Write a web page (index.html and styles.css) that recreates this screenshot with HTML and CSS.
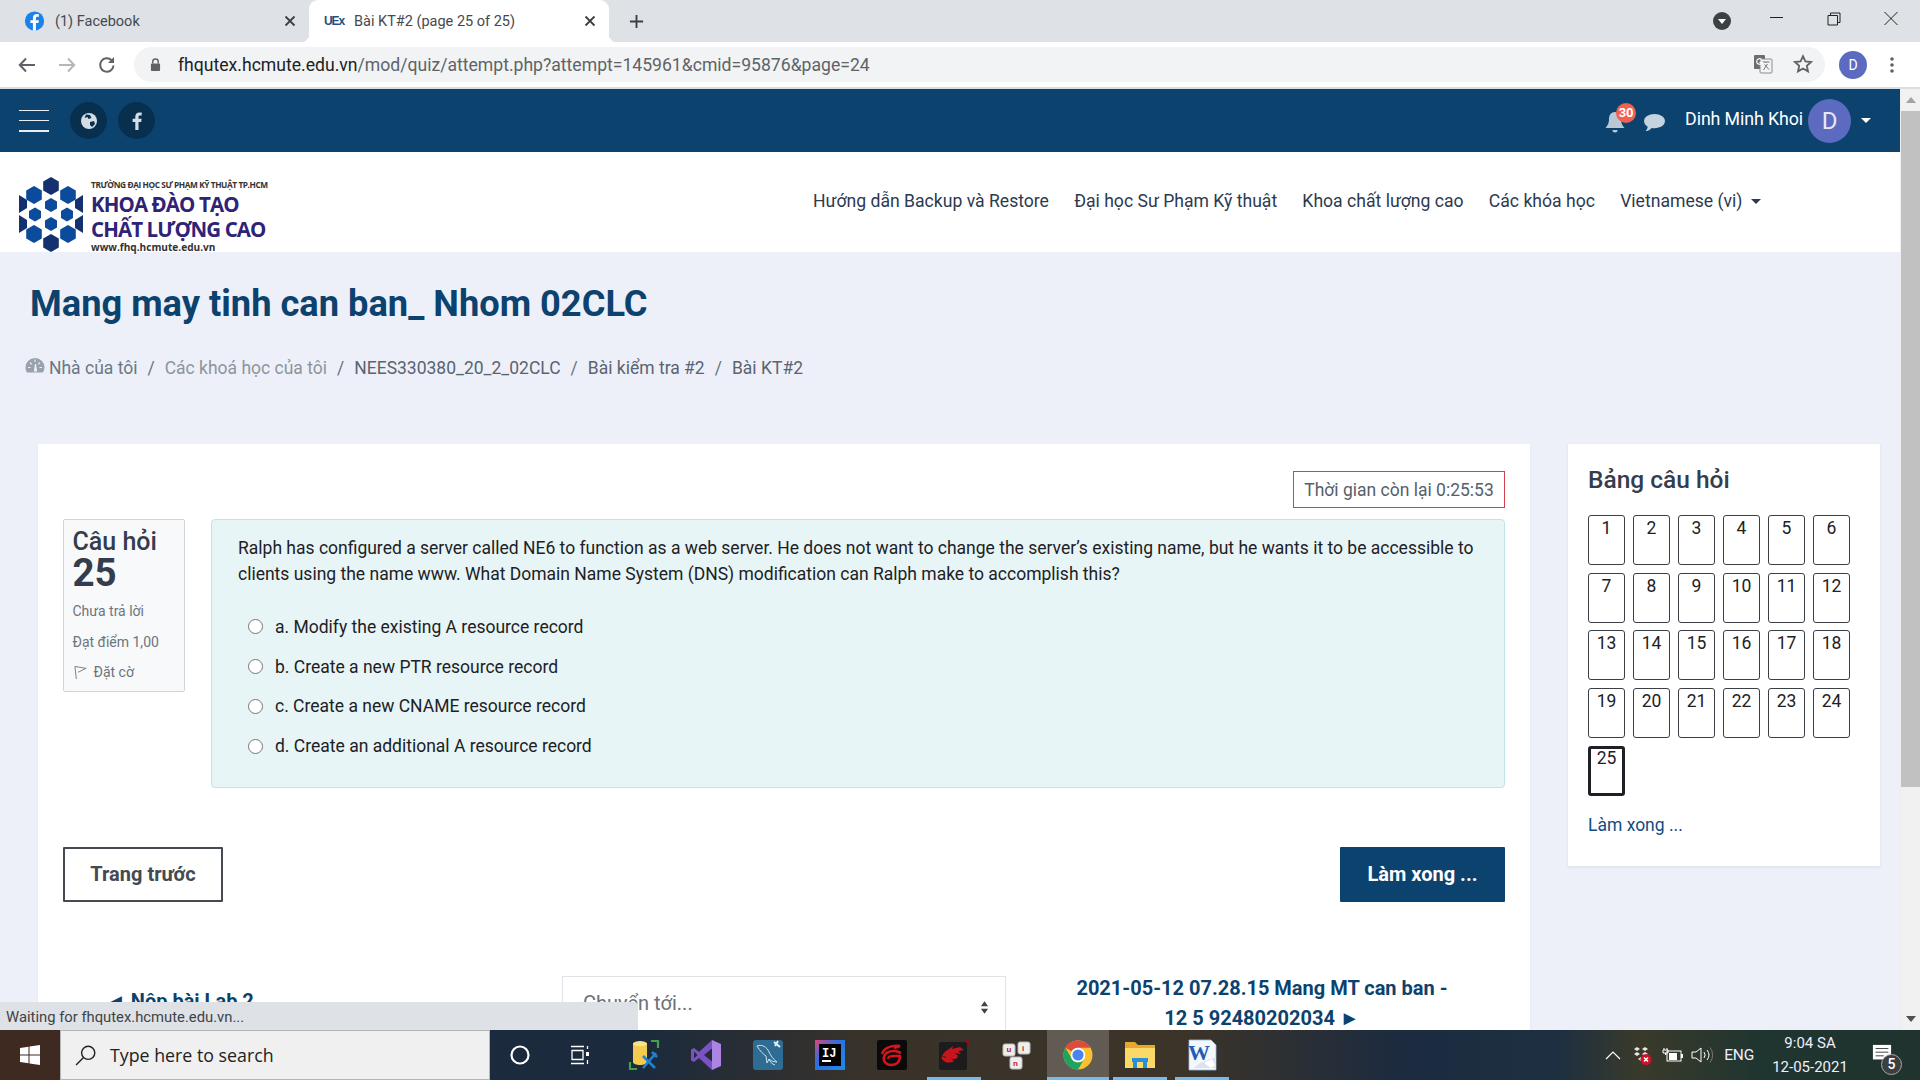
FILE: index.html
```html
<!DOCTYPE html>
<html lang="vi">
<head>
<meta charset="utf-8">
<title>Bài KT#2</title>
<link rel="stylesheet" href="styles.css">
</head>
<body>
<div class="screen">
  <div class="tabstrip">
    <div class="tab">
      <svg class="fav" viewBox="0 0 24 24"><circle cx="12" cy="12" r="11" fill="#1a82e8"/><path fill="#fff" d="M13.6 23v-8.600h2.900l.5-3.400h-3.400V8.900c0-1 .4-1.700 1.700-1.700H17V4.300c-.4-.1-1.400-.2-2.500-.2-2.600 0-4.300 1.500-4.300 4.400V11H7.300v3.400h2.900V23z"/></svg>
      <span class="tab-title">(1) Facebook</span>
      <svg class="tab-x" viewBox="0 0 12 12"><path d="M1.500 1.500l9 9M10.500 1.500l-9 9" stroke="#3c4043" stroke-width="1.800"/></svg>
    </div>
    <div class="tab tab-active">
      <span class="fav-text">UEx</span>
      <span class="tab-title">Bài KT#2 (page 25 of 25)</span>
      <svg class="tab-x" viewBox="0 0 12 12"><path d="M1.500 1.500l9 9M10.500 1.500l-9 9" stroke="#3c4043" stroke-width="1.800"/></svg>
    </div>
    <svg class="tab-plus" viewBox="0 0 16 16"><path d="M8 1v14M1 8h14" stroke="#3c4043" stroke-width="2"/></svg>
    <div class="win-controls">
      <svg class="tab-search" viewBox="0 0 18 18"><circle cx="9" cy="9" r="9" fill="#3c4043"/><path d="M5 7h8l-4 5z" fill="#fff"/></svg>
      <svg class="win-btn" viewBox="0 0 16 16"><path d="M1 6.500h13" stroke="#222" stroke-width="1"/></svg>
      <svg class="win-btn" viewBox="0 0 16 16"><path d="M2 4.500h9.500v9.500H2zM4.500 4.500V2H14v9.500h-2.500" fill="none" stroke="#222" stroke-width="1"/></svg>
      <svg class="win-btn" viewBox="0 0 16 16"><path d="M1.500 1l13 13M14.500 1l-13 13" stroke="#222" stroke-width="1"/></svg>
    </div>
  </div>

  <div class="toolbar">
    <svg class="tb-ico" viewBox="0 0 20 20"><path d="M18 10H3M9 3.500L2.800 10 9 16.500" fill="none" stroke="#5f6368" stroke-width="2"/></svg>
    <svg class="tb-ico" viewBox="0 0 20 20"><path d="M2 10h15M11 3.500l6.200 6.500-6.200 6.500" fill="none" stroke="#b4b7bb" stroke-width="2"/></svg>
    <svg class="tb-ico" viewBox="0 0 20 20"><path d="M16.500 10.500a6.700 6.700 0 1 1-1.900-5.200" fill="none" stroke="#5f6368" stroke-width="2"/><path d="M17 2v6h-6z" fill="#5f6368"/></svg>
    <div class="omnibox">
      <svg class="lock" viewBox="0 0 12 16"><path d="M3 7V5a3 3 0 0 1 6 0v2" fill="none" stroke="#5f6368" stroke-width="1.600"/><rect x="1" y="7" width="10" height="8" rx="1" fill="#5f6368"/></svg>
      <span class="url"><span class="url-host">fhqutex.hcmute.edu.vn</span>/mod/quiz/attempt.php?attempt=145961&amp;cmid=95876&amp;page=24</span>
      <svg class="translate" viewBox="0 0 20 20"><rect x="1" y="1" width="11" height="14" rx="1" fill="#6a6d71"/><rect x="7" y="5" width="12" height="14" rx="1" fill="#f1f3f4" stroke="#8a8d91"/><path d="M9.500 8h7M13 8v1M10.500 16l4-6M11.500 10.500l4.500 5" fill="none" stroke="#777" stroke-width="1"/><path d="M8.500 5.500a2.800 2.800 0 1 0 .6 3H6.500" fill="none" stroke="#fff" stroke-width="1.200"/></svg>
      <svg class="star" viewBox="0 0 20 20"><path d="M10 2.200l2.400 5.200 5.700.6-4.300 3.800 1.200 5.600-5-2.900-5 2.900 1.200-5.600L1.900 8l5.700-.6z" fill="none" stroke="#5f6368" stroke-width="1.800"/></svg>
    </div>
    <span class="profile">D</span>
    <svg class="kebab" viewBox="0 0 4 18"><circle cx="2" cy="3" r="1.800" fill="#5f6368"/><circle cx="2" cy="9" r="1.800" fill="#5f6368"/><circle cx="2" cy="15" r="1.800" fill="#5f6368"/></svg>
  </div>

  <div class="viewport">
    <div class="page">
      <nav class="topnav">
        <div class="burger"><i></i><i></i><i></i></div>
        <a class="round-btn round-first"><svg viewBox="0 0 20 20"><circle cx="10" cy="10" r="8" fill="#d5dde4"/><path d="M7 3.500l4 .5 1.500 3-3 1-1-2-3 1zM11 11l4-1 1 3-3 3-2-2z" fill="#082f4e"/></svg></a>
        <a class="round-btn"><svg viewBox="0 0 20 20"><path fill="#d5dde4" d="M11.500 19v-8h2.700l.4-3.200h-3.100V5.900c0-.9.300-1.500 1.600-1.500h1.600V1.600C14.400 1.500 13.500 1.400 12.400 1.400 10 1.400 8.300 2.900 8.300 5.600v2.200H5.600V11h2.700v8z"/></svg></a>
        <div class="nav-right">
          <span class="bell">
            <svg viewBox="0 0 22 24"><path d="M11 2c4 0 6 3 6 7 0 5 2 7 3.500 9H1.500C3 16 5 14 5 9c0-4 2-7 6-7zM8.500 20h5a2.500 2.500 0 0 1-5 0z" fill="#b8c8d6"/></svg>
            <b class="badge">30</b>
          </span>
          <svg class="chat" viewBox="0 0 24 20"><path d="M12 1c6 0 11 3 11 7.500S18 16 12 16c-1 0-2 0-3-.3C7.500 17.500 5 19 2.500 19c1.500-1.300 2.300-3 2.300-4.500C2.500 13 1 11 1 8.500 1 4 6 1 12 1z" fill="#c5d3de"/></svg>
          <span class="username">Dinh Minh Khoi</span>
          <span class="nav-avatar">D</span>
          <span class="caret caret-white"></span>
        </div>
      </nav>

      <header class="brand">
        <div class="logo">
          <svg class="logo-mark" viewBox="0 0 64 75">
            <defs>
              <polygon id="hexb" points="0,-9 7.800,-4.500 7.800,4.500 0,9 -7.800,4.500 -7.800,-4.500"/>
              <polygon id="hexs" points="0,-7 6,-3.500 6,3.500 0,7 -6,3.500 -6,-3.500"/>
            </defs>
            <g fill="#14306e">
              <use href="#hexb" x="32" y="9"/><use href="#hexb" x="32" y="66"/>
              <polygon points="0,18 8,23 8,31 0,36"/><polygon points="0,38 8,43 8,51 0,56"/>
              <polygon points="64,18 56,23 56,31 64,36"/><polygon points="64,38 56,43 56,51 64,56"/>
            </g>
            <g fill="#0c4a9c">
              <use href="#hexb" x="15" y="18"/><use href="#hexb" x="49" y="18"/>
              <use href="#hexb" x="15" y="57"/><use href="#hexb" x="49" y="57"/>
              <use href="#hexs" x="32" y="28"/><use href="#hexs" x="32" y="47"/>
              <use href="#hexs" x="16" y="37.500"/><use href="#hexs" x="48" y="37.500"/>
            </g>
          </svg>
          <div class="logo-text">
            <span class="logo-uni">TRƯỜNG ĐẠI HỌC SƯ PHẠM KỸ THUẬT TP.HCM</span>
            <span class="logo-big">KHOA ĐÀO TẠO</span>
            <span class="logo-big">CHẤT LƯỢNG CAO</span>
            <span class="logo-web">www.fhq.hcmute.edu.vn</span>
          </div>
        </div>
        <ul class="menu">
          <li>Hướng dẫn Backup và Restore</li>
          <li>Đại học Sư Phạm Kỹ thuật</li>
          <li>Khoa chất lượng cao</li>
          <li>Các khóa học</li>
          <li>Vietnamese (vi) <span class="caret caret-dark"></span></li>
        </ul>
      </header>

      <section class="title-block">
        <h1>Mang may tinh can ban_ Nhom 02CLC</h1>
        <ol class="crumbs">
          <li class="crumb-home"><svg class="dash" viewBox="0 0 20 16"><path d="M10 1a9.500 9.500 0 0 0-9.500 9.500c0 2 .6 3.700 1.600 5h15.800a8.600 8.600 0 0 0 1.600-5A9.500 9.500 0 0 0 10 1z" fill="#98a1ac"/><path d="M10 2.500v2.500M3 10.500h2.500M17 10.500h-2.500M5 5.500l1.800 1.800M15 5.500l-1.800 1.800M9.500 14l1-7 1 7z" stroke="#edf0f8" stroke-width="1.100" fill="#edf0f8"/></svg>Nhà của tôi</li>
          <li class="sep">/</li><li class="muted">Các khoá học của tôi</li>
          <li class="sep">/</li><li>NEES330380_20_2_02CLC</li>
          <li class="sep">/</li><li>Bài kiểm tra #2</li>
          <li class="sep">/</li><li>Bài KT#2</li>
        </ol>
      </section>

      <main class="main">
        <div class="card">
          <div class="timer-row"><div class="timer">Thời gian còn lại 0:25:53</div></div>
          <div class="question">
            <aside class="info">
              <div class="q-label">Câu hỏi</div>
              <div class="q-num">25</div>
              <div class="q-meta">Chưa trả lời</div>
              <div class="q-meta">Đạt điểm 1,00</div>
              <div class="q-meta q-flag"><svg viewBox="0 0 14 16"><path d="M2.500 15L1 1.500 13 3.500 5 7.500l-.8-.5" fill="none" stroke="#777" stroke-width="1"/></svg>Đặt cờ</div>
            </aside>
            <div class="q-body">
              <p class="q-text">Ralph has configured a server called NE6 to function as a web server. He does not want to change the server’s existing name, but he wants it to be accessible to clients using the name www. What Domain Name System (DNS) modification can Ralph make to accomplish this?</p>
              <div class="opts">
                <label class="opt"><span class="radio"></span>a. Modify the existing A resource record</label>
                <label class="opt"><span class="radio"></span>b. Create a new PTR resource record</label>
                <label class="opt"><span class="radio"></span>c. Create a new CNAME resource record</label>
                <label class="opt"><span class="radio"></span>d. Create an additional A resource record</label>
              </div>
            </div>
          </div>
          <div class="actions">
            <button class="btn btn-ghost">Trang trước</button>
            <button class="btn btn-solid">Làm xong ...</button>
          </div>
          <div class="activity-nav">
            <a class="prev-link">◄ Nộp bài Lab 2</a>
            <div class="jump">Chuyển tới...<svg viewBox="0 0 10 16"><path d="M5 1l4 5.500H1zM5 15l4-5.500H1z" fill="#444"/></svg></div>
            <a class="next-link">2021-05-12 07.28.15 Mang MT can ban -<br>12 5 92480202034 ►</a>
          </div>
        </div>

        <aside class="panel">
          <h2>Bảng câu hỏi</h2>
          <div class="grid">
            <a class="q">1</a><a class="q">2</a><a class="q">3</a><a class="q">4</a><a class="q">5</a><a class="q">6</a>
            <a class="q">7</a><a class="q">8</a><a class="q">9</a><a class="q">10</a><a class="q">11</a><a class="q">12</a>
            <a class="q">13</a><a class="q">14</a><a class="q">15</a><a class="q">16</a><a class="q">17</a><a class="q">18</a>
            <a class="q">19</a><a class="q">20</a><a class="q">21</a><a class="q">22</a><a class="q">23</a><a class="q">24</a>
            <a class="q q-current">25</a>
          </div>
          <a class="finish">Làm xong ...</a>
        </aside>
      </main>
    </div>

    <div class="scrollbar">
      <span class="sb-btn"><i class="sb-up"></i></span>
      <span class="sb-thumb"></span>
      <span class="sb-track"></span>
      <span class="sb-btn"><i class="sb-down"></i></span>
    </div>

    <div class="status">Waiting for fhqutex.hcmute.edu.vn...</div>
  </div>

  <footer class="taskbar">
    <div class="start"><svg viewBox="0 0 20 20"><path fill="#fff" d="M0 3l8.500-1.200V9.500H0zM9.500 1.600L20 0v9.500H9.500zM0 10.500h8.500v7.700L0 17zM9.500 10.500H20V20l-10.500-1.500z"/></svg></div>
    <div class="search">
      <svg viewBox="0 0 20 20"><circle cx="12" cy="8" r="6" fill="none" stroke="#222" stroke-width="1.300"/><path d="M7.500 12.500L1 19" stroke="#222" stroke-width="1.300"/></svg>
      <span>Type here to search</span>
    </div>
    <div class="slot slot-sm"><svg viewBox="0 0 22 22"><circle cx="11" cy="11" r="8.500" fill="none" stroke="#fff" stroke-width="2.200"/></svg></div>
    <div class="slot slot-sm"><svg viewBox="0 0 22 22"><path d="M2 2.500h13M2 19.500h13M3 6.500h11v9H3z" fill="none" stroke="#fff" stroke-width="1.300"/><path d="M18.500 2v3M18.500 16v4" stroke="#fff" stroke-width="1.300"/><rect x="17" y="8" width="3" height="4" fill="#fff"/></svg></div>
    <div class="slot slot-third"><svg class="ico-lg" viewBox="0 0 32 32"><path d="M23 2h7v7M2 23v7h7" fill="none" stroke="#46a04a" stroke-width="2.200"/><path d="M5 5c0-4 14-4 14 0v18c0 4-14 4-14 0z" fill="#f3cc4f"/><path d="M5 5c0 3 14 3 14 0s-14-3-14 0z" fill="#f9e38a"/><path d="M15 17l12 12M28 14l-13 15M24 13l5 5" stroke="#1f82d0" stroke-width="2.600" fill="none"/></svg></div>
    <div class="slot"><svg class="ico-lg" viewBox="0 0 32 32"><path d="M1 10.500L4 9l5 4L22 1v8.500L14 16l8 6.500V31L9 19l-5 4-3-1.500zM4 12.500v7l3.500-3.500z" fill="#7b52c4" fill-rule="evenodd"/><path d="M22 1l9 4v22l-9 4z" fill="#ab84e4"/></svg></div>
    <div class="slot"><svg class="ico-lg" viewBox="0 0 32 32"><rect x="1" y="1" width="30" height="30" rx="3" fill="#2f6c93"/><path d="M5 7c5-2 10 1 12 6 2 4 4 7 8 10-3 0-6-1-8-3l-2 4-1-7c-3-2-6-5-9-10zM17 20c1 3 3 5 6 6" fill="none" stroke="#cfe3ee" stroke-width="1"/><path d="M22 3l6 5M26 2l-3 5" stroke="#e5f0f6" stroke-width="2"/></svg></div>
    <div class="slot"><svg class="ico-lg" viewBox="0 0 32 32"><defs><linearGradient id="ij" x1="0" y1="0" x2="1" y2="1"><stop offset="0" stop-color="#e0447a"/><stop offset=".4" stop-color="#2f6fe0"/><stop offset="1" stop-color="#1f8ae8"/></linearGradient></defs><rect x="1" y="1" width="30" height="30" fill="url(#ij)"/><rect x="5" y="5" width="22" height="22" fill="#000"/><rect x="8" y="21" width="9" height="2" fill="#fff"/><text x="8" y="18" class="ij-text">IJ</text></svg></div>
    <div class="slot"><svg class="ico-lg" viewBox="0 0 32 32"><rect x="1" y="1" width="30" height="30" rx="2" fill="#0a0a0a"/><path d="M6 15c2-6 9-9 18-8l-6 2M25 17h-9M24 17c0 6-4 9-9 9-5 0-8-4-7-8 1-4 5-6 10-6 3 0 5 1 7 2" fill="none" stroke="#d6141c" stroke-width="2.600"/><path d="M12 20c0-2 2-3 4-3" stroke="#d6141c" stroke-width="2" fill="none"/></svg></div>
    <div class="slot slot-open"><svg class="ico-lg" viewBox="0 0 32 32"><rect x="1" y="3" width="28" height="28" rx="2" fill="#1c1c1e"/><path d="M27 1a6 6 0 0 1 4 6" stroke="#8c1014" stroke-width="3" fill="none"/><path d="M4 17c3-6 8-7 11-10l-1 3 8-2 4 3-6 1 3 3-7-1c3 1 5 3 3 5-2 2-6 1-8-1l5 4c-3 2-8 2-10 0-2-1-3-3-2-5 1 1 3 2 5 1z" fill="#c8141c"/></svg></div>
    <div class="slot"><svg class="ico-lg" viewBox="0 0 32 32"><g fill="#eee" stroke="#bbb"><rect x="3" y="5" width="12" height="12" rx="2"/><rect x="18" y="3" width="12" height="12" rx="2"/><rect x="10" y="18" width="12" height="12" rx="2"/></g><text x="6.500" y="13" class="uk-text">u</text><text x="22" y="11.500" class="uk-text">i</text><text x="13" y="27" class="uk-text">n</text></svg></div>
    <div class="slot slot-open slot-active"><svg class="ico-lg" viewBox="0 0 32 32"><circle cx="16" cy="16" r="14.500" fill="#fbc02d"/><path d="M16 1.500A14.500 14.500 0 0 1 28.560 8.750H16A7.250 7.250 0 0 0 9.720 12.370L3.440 8.750A14.500 14.500 0 0 1 16 1.500z" fill="#dd4b3e"/><path d="M3.440 8.750A14.500 14.500 0 0 0 16 30.500L22.280 19.630A7.250 7.250 0 0 1 9.720 19.630z" fill="#1ea362"/><circle cx="16" cy="16" r="7.250" fill="#fff"/><circle cx="16" cy="16" r="5.600" fill="#4a84f0"/></svg></div>
    <div class="slot slot-open"><svg class="ico-lg" viewBox="0 0 32 32"><path d="M1 3h10l3 3h17v23H1z" fill="#e8a82c"/><path d="M1 9h30v20H1z" fill="#fad968"/><path d="M9 29v-6h-1v-4h16v4h-1v6h-4v-6h-6v6z" fill="#2b8fd8"/></svg></div>
    <div class="slot slot-open"><svg class="ico-lg" viewBox="0 0 32 32"><path d="M3 1h22l5 5v25H3z" fill="#f4f7fb" stroke="#9dbbe0" stroke-width=".8"/><path d="M14 24l16-6v11H8z" fill="#dbe3ee"/><path d="M18 24l8-4 3 6-4 3z" fill="#fff"/><text x="2" y="21" class="w-text">W</text></svg></div>

    <div class="tray">
      <svg class="tray-chev" viewBox="0 0 16 10"><path d="M1 9l7-7 7 7" fill="none" stroke="#fff" stroke-width="1.200"/></svg>
      <svg class="tray-drop" viewBox="0 0 20 20"><g fill="#e8e8e8"><path d="M5 2l3 2-3 2-3-2zM13 2l3 2-3 2-3-2zM5 7l3 2-3 2-3-2zM13 7l3 2-3 2-3-2zM9 12l3 2-3 2-3-2z"/></g><circle cx="14" cy="14.500" r="5.500" fill="#d0112b"/><path d="M12 12.500l4 4M16 12.500l-4 4" stroke="#fff" stroke-width="1.500"/></svg>
      <svg class="tray-batt" viewBox="0 0 22 16"><path d="M2 1v2M5 1v2M1 3h5v3H1zM3.500 6v2" stroke="#fff" fill="none"/><rect x="5" y="4" width="14" height="10" fill="none" stroke="#fff"/><rect x="7" y="6" width="8" height="7" fill="#fff"/><rect x="19" y="7" width="2" height="4" fill="#fff"/></svg>
      <svg class="tray-vol" viewBox="0 0 22 18"><path d="M1 6h4l5-4v14l-5-4H1z" fill="none" stroke="#fff"/><path d="M13 6a5 5 0 0 1 0 6M16 4a8 8 0 0 1 0 10" fill="none" stroke="#fff"/><path d="M19 1.500a12 12 0 0 1 0 15" fill="none" stroke="#777"/></svg>
      <span class="tray-lang">ENG</span>
      <div class="clock"><span>9:04 SA</span><span>12-05-2021</span></div>
      <div class="notif">
        <svg viewBox="0 0 22 22"><path d="M1 1h20v16H1z" fill="#fff"/><path d="M4 5h14M4 9h14M4 13h9" stroke="#333"/></svg>
        <b class="notif-count">5</b>
      </div>
    </div>
  </footer>
</div>
</body>
</html>
```

FILE: styles.css
```css
* { box-sizing: border-box; }
html, body { margin: 0; padding: 0; height: 100%; overflow: hidden; }
body { font-family: Roboto, "Noto Sans", sans-serif; color: #1d2125; }
.screen { width: 1920px; height: 1080px; display: flex; flex-direction: column; overflow: hidden; }

/* browser chrome */
.tabstrip { height: 42px; flex: none; background: #dee1e6; display: flex; align-items: center; }
.tab { width: 309px; height: 42px; display: flex; align-items: center; padding: 0 13px 0 24px; font-size: 14.500px; color: #45494d; flex: none; }
.tab-active { width: 300px; background: #fff; border-radius: 9px 9px 0 0; padding-left: 15px; position: relative; }
.tab-active::before, .tab-active::after { content: ""; position: absolute; bottom: 0; width: 8px; height: 8px; }
.tab-active::before { left: -8px; background: radial-gradient(circle at 0 0, transparent 8px, #fff 8.5px); }
.tab-active::after { right: -8px; background: radial-gradient(circle at 100% 0, transparent 8px, #fff 8.5px); }
.fav { width: 21px; height: 22px; flex: none; }
.fav-text { width: 30px; font: 800 12px "Liberation Sans", sans-serif; color: #1f4f80; letter-spacing: -1.100px; flex: none; }
.tab-title { flex: 1; margin-left: 10px; white-space: nowrap; }
.tab-active .tab-title { margin-left: 0; }
.tab-x { width: 12px; height: 12px; flex: none; }
.tab-plus { width: 15px; height: 15px; margin-left: 20px; flex: none; }
.win-controls { margin-left: auto; display: flex; align-items: center; }
.tab-search { width: 18px; height: 18px; margin-right: 38px; }
.win-btn { width: 16px; height: 16px; margin-right: 41px; margin-top: -4px; }
.win-btn:last-child { margin-right: 21px; }

.toolbar { height: 47px; flex: none; background: #fff; border-bottom: 2px solid #dcdde0; display: flex; align-items: center; padding: 0 20px 0 17px; }
.tb-ico { width: 20px; height: 20px; margin-right: 20px; flex: none; }
.tb-ico:nth-child(3) { margin-right: 17px; }
.omnibox { width: 1691px; height: 35px; flex: none; margin-bottom: 1px; background: #f1f3f4; border-radius: 18px; display: flex; align-items: center; padding: 0 12px 0 16px; }
.lock { width: 11px; height: 15px; margin-right: 17px; flex: none; }
.url { flex: 1; font-size: 17.600px; color: #5f6368; white-space: nowrap; padding-top: 2px; }
.url-host { color: #202124; }
.translate { width: 20px; height: 20px; margin-right: 20px; }
.star { width: 20px; height: 20px; }
.profile { width: 28px; height: 28px; border-radius: 50%; background: #5c6bc0; color: #fff; font-size: 14px; display: flex; align-items: center; justify-content: center; margin-left: 14px; flex: none; }
.kebab { width: 4px; height: 18px; margin-left: 23px; flex: none; }

.viewport { flex: 1; min-height: 0; display: flex; position: relative; }
.page { flex: 1; min-width: 0; overflow: hidden; background: #edf0f8; }

/* moodle top bar */
.topnav { height: 63px; background: #0c426e; display: flex; align-items: center; padding: 0 0 0 19px; color: #fff; box-shadow: 0 2px 4px rgba(0,0,0,.08); position: relative; }
.burger { width: 30px; height: 22px; display: flex; flex-direction: column; justify-content: space-between; }
.burger i { display: block; height: 1.600px; background: #e8eef3; }
.round-btn { width: 37px; height: 37px; border-radius: 50%; background: #082f4e; display: flex; align-items: center; justify-content: center; margin-left: 11px; }
.round-first { margin-left: 21px; }
.round-btn svg { width: 20px; height: 20px; }
.nav-right { margin-left: auto; display: flex; align-items: center; padding-right: 29px; }
.bell { position: relative; width: 22px; height: 24px; margin-right: 17px; margin-top: 2px; }
.bell svg { width: 22px; height: 24px; display: block; }
.badge { position: absolute; left: 12px; top: -7px; width: 20px; height: 20px; border-radius: 50%; background: #f0614f; color: #fff; font-size: 13px; font-weight: 700; line-height: 20px; text-align: center; }
.chat { width: 23px; height: 19px; margin-right: 19px; margin-top: 3px; }
.username { font-size: 17.800px; white-space: nowrap; letter-spacing: -.1px; line-height: 22px; margin-top: -3px; }
.nav-avatar { width: 43px; height: 44px; border-radius: 50%; background: #5c6bc0; color: #e6e8f5; font-size: 24px; display: flex; align-items: center; justify-content: center; margin-left: 5px; }
.caret { display: inline-block; width: 0; height: 0; border-left: 5px solid transparent; border-right: 5px solid transparent; }
.caret-white { border-top: 5px solid #fff; margin-left: 10px; }
.caret-dark { border-top: 5px solid #2d3a4f; margin-left: 4px; vertical-align: 3px; }

/* brand row */
.brand { height: 100px; background: #fff; display: flex; align-items: flex-start; padding: 25px 0 0 19px; position: relative; }
.logo { display: flex; gap: 8px; height: 75px; }
.logo-mark { width: 64px; height: 75px; flex: none; }
.logo-text { display: flex; flex-direction: column; font-family: "Open Sans", sans-serif; padding-top: 1px; }
.logo-uni { font-size: 8.300px; font-weight: 700; color: #333; line-height: 14px; letter-spacing: -.42px; white-space: nowrap; }
.logo-big { font-size: 20.500px; font-weight: 700; color: #2f2376; line-height: 25px; letter-spacing: -.9px; white-space: nowrap; }
.logo-web { font-size: 10.100px; font-weight: 700; color: #333; line-height: 11px; white-space: nowrap; }
.menu { list-style: none; margin: 0; padding: 0; position: absolute; left: 813px; top: 37px; display: flex; gap: 25.200px; font-size: 17.600px; color: #2d3a4f; white-space: nowrap; line-height: 24px; }

/* title */
.title-block { height: 192px; padding: 31px 0 0 30px; }
h1 { margin: 0; font-size: 36.250px; font-weight: 700; color: #0c426e; line-height: 42px; }
.crumbs { list-style: none; padding: 0; margin: 31px 0 0 -5px; display: flex; font-size: 17.500px; line-height: 24px; color: #5a6470; }
.crumb-home { display: flex; align-items: center; color: #6b7785; }
.dash { width: 20px; height: 16px; margin-right: 4px; margin-top: -7px; }
.sep { margin: 0 10px; color: #6a737c; }
.muted { color: #8d949b; }

/* main */
.main { display: flex; align-items: flex-start; padding-left: 38px; gap: 38px; }
.card { width: 1492px; flex: none; background: #fff; padding: 27px 25px 0; box-shadow: 0 1px 2px rgba(0,0,0,.05); }
.timer-row { display: flex; justify-content: flex-end; margin-bottom: 11px; }
.timer { width: 212px; height: 37px; border: 1px solid #d6404e; color: #57606a; font-size: 17.500px; line-height: 36px; text-align: center; white-space: nowrap; }
.question { display: flex; gap: 26px; }
.info { width: 122px; height: 173px; flex: none; background: #f8f9fa; border: 1px solid #ced4da; border-radius: 2px; padding: 8px 0 0 8.500px; color: #6a7178; }
.q-label { font-size: 25px; font-weight: 500; color: #343d4d; line-height: 27px; }
.q-num { font-size: 38.500px; font-weight: 700; color: #343d4d; line-height: 36px; margin-bottom: 11px; }
.q-meta { font-size: 14px; line-height: 19px; margin-bottom: 11.500px; color: #6c757d; white-space: nowrap; }
.q-flag { display: flex; align-items: center; padding-left: 1px; }
.q-flag svg { width: 13px; height: 15px; margin-right: 7px; }
.q-body { width: 1294px; height: 269px; flex: none; background: #e7f5f6; border: 1px solid #bfe5ec; border-radius: 4px; padding: 15px 26px 0; }
.q-text { margin: 0; font-size: 17.500px; line-height: 26px; color: #1d2125; }
.opts { display: flex; flex-direction: column; margin-top: 20px; padding-left: 10px; }
.opt { display: flex; align-items: center; height: 39.800px; font-size: 17.500px; color: #1d2125; }
.radio { width: 15px; height: 15px; border: 1.500px solid #767676; border-radius: 50%; background: #fff; margin-right: 12px; flex: none; }
.actions { display: flex; justify-content: space-between; margin-top: 59px; }
.btn { height: 55px; font-family: inherit; font-size: 20px; font-weight: 700; border-radius: 1px; padding-bottom: 3px; }
.btn-ghost { width: 160px; background: #fff; border: 2px solid #444a50; color: #444a50; }
.btn-solid { width: 165px; background: #0c426e; border: 0; color: #fff; }
.activity-nav { display: flex; align-items: flex-start; margin-top: 74px; height: 80px; font-size: 20px; font-weight: 700; color: #0c426e; }
.prev-link { width: 499px; padding: 13px 0 0 47px; white-space: nowrap; text-indent: -4px; }
.jump { width: 444px; height: 66px; border: 1px solid #dfe2e6; background: #fff; font-size: 20px; font-weight: 400; color: #6a7178; padding: 14px 20px; display: flex; align-items: flex-start; justify-content: space-between; }
.jump svg { width: 9px; height: 15px; margin-top: 9px; margin-right: -4px; }
.next-link { width: 442px; text-align: center; line-height: 30px; padding-left: 70px; margin-top: -3px; white-space: nowrap; }

/* side panel */
.panel { width: 312px; height: 422px; flex: none; background: #fff; padding: 21px 20px 0; box-shadow: 0 1px 3px rgba(0,0,0,.08); }
h2 { margin: 0 0 21px; font-size: 24.500px; font-weight: 500; line-height: 29px; color: #343d4d; }
.grid { display: grid; grid-template-columns: repeat(6, 37px); column-gap: 8px; row-gap: 7.700px; grid-auto-rows: 50px; }
.q { border: 1px solid #3a3f45; border-radius: 3px; text-align: center; font-size: 17.500px; line-height: 22px; color: #1d2125; padding-top: 1px; }
.q-current { border: 3px solid #1d2125; padding-top: 0; line-height: 19px; }
.finish { display: block; margin-top: 17px; font-size: 17.500px; line-height: 24px; color: #0f4c81; }

/* scrollbar */
.scrollbar { width: 20px; flex: none; background: #f1f1f1; display: flex; flex-direction: column; border-left: 1px solid #eee; }
.sb-btn { height: 22px; display: flex; align-items: center; justify-content: center; flex: none; }
.sb-up { border-left: 5px solid transparent; border-right: 5px solid transparent; border-bottom: 6px solid #a3a3a3; }
.sb-down { border-left: 5px solid transparent; border-right: 5px solid transparent; border-top: 6px solid #505050; }
.sb-thumb { height: 676px; background: #c1c1c1; flex: none; }
.sb-track { flex: 1; }
.status { position: absolute; left: 0; bottom: 0; width: 638px; height: 28px; background: #dee1e6; border-top-right-radius: 4px; font-size: 14.800px; color: #3f4347; padding: 6px 0 0 6px; }

/* taskbar */
.taskbar { height: 50px; flex: none; display: flex; align-items: stretch; background: linear-gradient(90deg, #3e2a20 0, #3e2a20 60px, #1b2a3d 490px, #1b2a3d 640px, #38322a 860px, #3c3428 1180px, #1c2b40 1400px, #1d3040 1560px, #3a3a2a 1640px, #1f3530 1760px, #20332f 1920px); }
.start { width: 60px; display: flex; align-items: center; justify-content: center; }
.start svg { width: 20px; height: 20px; }
.search { width: 430px; background: #f0f0f0; border: 1px solid #b5b5b5; display: flex; align-items: center; padding-left: 14px; font-family: "Open Sans", sans-serif; font-size: 17.800px; color: #222; }
.search svg { width: 22px; height: 22px; margin-right: 13px; }
.slot { width: 62px; flex: none; display: flex; align-items: center; justify-content: center; border-bottom: 3px solid transparent; padding-top: 3px; }
.slot-sm { width: 60px; }
.slot-third { margin-left: 3px; }
.slot svg { width: 22px; height: 22px; }
.slot .ico-lg { width: 32px; height: 32px; }
.slot-open { border-bottom-color: #76b9ed; border-image: linear-gradient(90deg, transparent 5px, #76b9ed 5px, #76b9ed calc(100% - 5px), transparent calc(100% - 5px)) 1; }
.slot-active { background-color: rgba(255,255,255,.2); border-image: none; }
.ij-text { font: 700 12px "Liberation Mono", monospace; fill: #fff; }
.uk-text { font: 700 8px "Liberation Sans", sans-serif; fill: #c8141c; }
.w-text { font: 700 22px "Liberation Serif", serif; fill: #1f5eb8; }
.tray { margin-left: auto; display: flex; align-items: center; color: #fff; }
.tray svg { flex: none; }
.tray-chev { width: 16px; height: 10px; margin-right: 11.500px; }
.tray-drop { width: 20px; height: 20px; margin-right: 10px; }
.tray-batt { width: 22px; height: 16px; margin-right: 6.500px; }
.tray-vol { width: 22px; height: 18px; margin-right: 11.500px; }
.tray-lang { font-size: 15.500px; margin-right: 16px; letter-spacing: -.2px; color: #eef; }
.clock { width: 80px; display: flex; flex-direction: column; align-items: center; font-size: 15px; line-height: 24px; white-space: nowrap; color: #eef; }
.notif { width: 70px; height: 50px; position: relative; padding: 14px 0 0 22px; }
.notif svg { width: 20px; height: 20px; display: block; }
.notif-count { position: absolute; left: 31px; top: 24px; width: 21px; height: 21px; border-radius: 50%; background: #3c3f3f; border: 1px solid #aaa; font-size: 14px; line-height: 19px; text-align: center; font-weight: 500; }
```
